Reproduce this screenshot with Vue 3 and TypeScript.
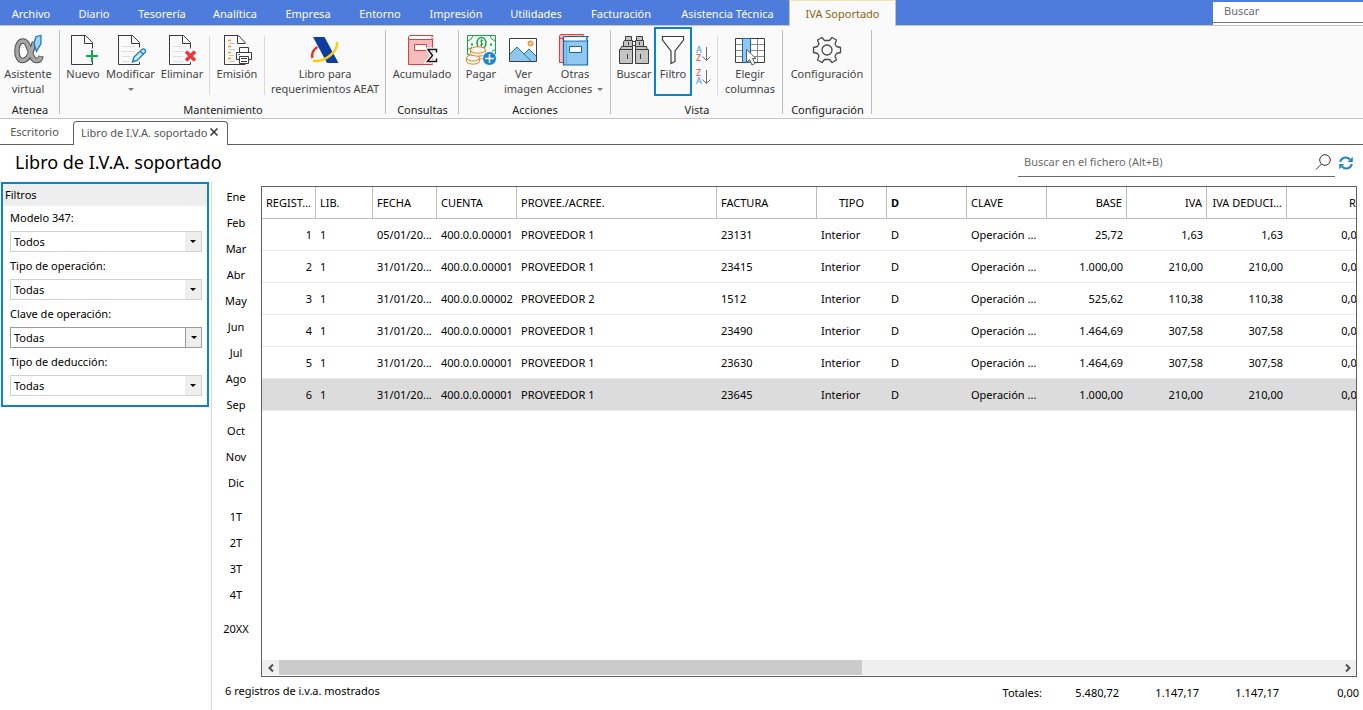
<script setup lang="ts">
import { ref } from 'vue'

interface Entry {
  id: number
  lib: string
  date: string
  account: string
  name: string
  invoice: string
  type: string
  d: string
  key: string
  base: string
  vat: string
  deductible: string
  re: string
}

interface Filter {
  id: string
  label: string
  value: string
}

const menu: string[] = [
  'Archivo', 'Diario', 'Tesorería', 'Analítica', 'Empresa', 'Entorno',
  'Impresión', 'Utilidades', 'Facturación', 'Asistencia Técnica', 'IVA Soportado',
]
const activeMenu = ref('IVA Soportado')

const filters: Filter[] = [
  { id: 'modelo', label: 'Modelo 347:', value: 'Todos' },
  { id: 'tipo-operacion', label: 'Tipo de operación:', value: 'Todas' },
  { id: 'clave', label: 'Clave de operación:', value: 'Todas' },
  { id: 'deduccion', label: 'Tipo de deducción:', value: 'Todas' },
]

const periods: string[][] = [
  ['Ene', 'Feb', 'Mar', 'Abr', 'May', 'Jun', 'Jul', 'Ago', 'Sep', 'Oct', 'Nov', 'Dic'],
  ['1T', '2T', '3T', '4T'],
  ['20XX'],
]

function entry(
  id: number, date: string, account: string, name: string,
  invoice: string, base: string, vat: string,
): Entry {
  return {
    id, lib: '1', date, account, name, invoice, type: 'Interior', d: 'D',
    key: 'Operación ...', base, vat, deductible: vat, re: '0,00',
  }
}

const rows: Entry[] = [
  entry(1, '05/01/20...', '400.0.0.00001', 'PROVEEDOR 1', '23131', '25,72', '1,63'),
  entry(2, '31/01/20...', '400.0.0.00001', 'PROVEEDOR 1', '23415', '1.000,00', '210,00'),
  entry(3, '31/01/20...', '400.0.0.00002', 'PROVEEDOR 2', '1512', '525,62', '110,38'),
  entry(4, '31/01/20...', '400.0.0.00001', 'PROVEEDOR 1', '23490', '1.464,69', '307,58'),
  entry(5, '31/01/20...', '400.0.0.00001', 'PROVEEDOR 1', '23630', '1.464,69', '307,58'),
  entry(6, '31/01/20...', '400.0.0.00001', 'PROVEEDOR 1', '23645', '1.000,00', '210,00'),
]
const selected = ref(6)
</script>

<template>
  <div class="app">
    <header class="menubar">
      <nav class="menu">
        <button
          v-for="item in menu"
          :key="item"
          type="button"
          :class="{ active: item === activeMenu }"
          @click="activeMenu = item"
        >{{ item }}</button>
      </nav>
      <input class="global-search" type="text" placeholder="Buscar" aria-label="Buscar">
    </header>

    <section class="ribbon">
      <div class="group atenea">
        <div class="tools">
          <button type="button" class="tool">
            <svg width="32" height="32" viewBox="0 0 32 32" fill="none">
              <path d="M22.500 8C20.500 15 17 26.500 10.500 26.500C3 26.500 3 7 11 7C18.500 7 17.500 26.500 24.500 26.500C27.500 26.500 28.500 25 29 22" stroke="#4d4d4d" stroke-width="5.500" />
              <path d="M22.500 8C20.500 15 17 26.500 10.500 26.500C3 26.500 3 7 11 7C18.500 7 17.500 26.500 24.500 26.500C27.500 26.500 28.500 25 28.800 22.500" stroke="#a6a6a6" stroke-width="3.500" />
              <path d="M24 2.500L29 1.500V9.500L24.500 17.500L22 9.500Z" fill="#9fd2f3" stroke="#1673bd" stroke-width="1.200" />
            </svg>
            <span>Asistente<br>virtual</span>
          </button>
        </div>
        <div class="caption">Atenea</div>
      </div>

      <div class="group mantenimiento">
        <div class="tools">
          <button type="button" class="tool">
            <svg width="32" height="32" viewBox="0 0 32 32" fill="none">
              <path d="M4 1.500H18.500L25.500 8.500V14.500M4.500 1V30.500H25.500V27" stroke="#3b3b3b" />
              <path d="M17.500 2V9.500H25" stroke="#3b3b3b" />
              <path d="M19 22H31M25 16V28" stroke="#10a64a" stroke-width="2" />
            </svg>
            <span>Nuevo</span>
          </button>
          <button type="button" class="tool">
            <svg width="32" height="32" viewBox="0 0 32 32" fill="none">
              <path d="M7 12.500H20M7 17.500H20M7 22.500H16M7 27.500H14" stroke="#dedede" />
              <path d="M3 1.500H17.500L24.500 8.500V13.500M3.500 1V30.500H24.500V28" stroke="#3b3b3b" />
              <path d="M16.500 2V9.500H24" stroke="#3b3b3b" />
              <path d="M19 23L27 15.500C29 14 31.500 16.500 30 18.500L22 26.500L17.500 28Z" fill="#d3eaf9" stroke="#2180c5" stroke-width="1.400" />
              <path d="M25.500 17.500L28.500 20.500" stroke="#2180c5" stroke-width="1.500" />
            </svg>
            <span>Modificar</span>
            <i class="caret"></i>
          </button>
          <button type="button" class="tool">
            <svg width="32" height="32" viewBox="0 0 32 32" fill="none">
              <path d="M7 12.500H20M7 17.500H18M7 22.500H17M7 27.500H19" stroke="#dedede" />
              <path d="M3 1.500H17.500L24.500 8.500V14.500M3.500 1V30.500H24.500V28" stroke="#3b3b3b" />
              <path d="M16.500 2V9.500H24" stroke="#3b3b3b" />
              <path d="M20 17.500L29 26.500M29 17.500L20 26.500" stroke="#ee3638" stroke-width="3.500" />
            </svg>
            <span>Eliminar</span>
          </button>
          <i class="rule"></i>
          <button type="button" class="tool">
            <svg width="32" height="32" viewBox="0 0 32 32" fill="none">
              <path d="M3 1.500H17.500L24.500 9M3.500 1V30.500H24.500" stroke="#3b3b3b" />
              <path d="M16.500 2V9.500H24.500" stroke="#3b3b3b" />
              <path d="M7 6.500H10M7 12.500H10M7 18.500H10M7 24.500H10" stroke="#f29a1f" stroke-width="1.500" />
              <path d="M8 9.500H14M8 15.500H14M8 21.500H13M8 27.500H14" stroke="#c6c6c6" />
              <path d="M18.500 18V13.500H27.500V18M18 25.500H15.500V18.500H30.500V25.500H28" fill="#fafafa" stroke="#3b3b3b" />
              <path d="M18.500 22.500H27.500V29.500H18.500ZM20 24.500H26M20 27.500H26" fill="#fafafa" stroke="#3b3b3b" />
              <path d="M17 20.500H19" stroke="#2d8fd5" />
            </svg>
            <span>Emisión</span>
          </button>
          <i class="rule"></i>
          <button type="button" class="tool">
            <svg width="32" height="32" viewBox="0 0 32 32" fill="none">
              <path d="M8.500 13C4.500 15 2 20 3.500 24" stroke="#e03131" stroke-width="2.500" />
              <path d="M4 3H15.500L29.500 29H18Z" fill="#0e3da0" />
              <path d="M28 8C29 17 17.500 28 4 27" stroke="#f8cd13" stroke-width="2.500" />
            </svg>
            <span>Libro para<br>requerimientos AEAT</span>
          </button>
        </div>
        <div class="caption">Mantenimiento</div>
      </div>

      <div class="group consultas">
        <div class="tools">
          <button type="button" class="tool">
            <svg width="32" height="32" viewBox="0 0 32 32" fill="none">
              <path d="M2.500 3V30.500H26.500V5.500H4C2 5.500 2 1.500 4 1.500H27L25.500 3.500L27 5.500" fill="#f4bcbc" stroke="#e63a3c" />
              <path d="M4 2H26L25 3.500L26 5H4C3 4.500 3 2.500 4 2Z" fill="#fff" />
              <path d="M8.500 10.500H20.500V16.500H8.500Z" fill="#fff" stroke="#e63a3c" />
              <path d="M30.500 18.500V15.500H22L26.500 21.500L21.500 27.500H30.500V24.500" stroke="#fafafa" stroke-width="4" />
              <path d="M30.500 18.500V15.500H22L26.500 21.500L21.500 27.500H30.500V24.500" stroke="#181818" stroke-width="1.500" />
            </svg>
            <span>Acumulado</span>
          </button>
        </div>
        <div class="caption">Consultas</div>
      </div>

      <div class="group acciones">
        <div class="tools">
          <button type="button" class="tool">
            <svg width="32" height="32" viewBox="0 0 32 32" fill="none">
              <path d="M2.500 1.500H30.500V20.500H2.500ZM3 6.500C6 6 7 4.500 7.500 2M30 6.500C27 6 26 4.500 25.500 2M30 16C27 16 26 18 25.500 20M3 15C5 15 6 14 7 13" fill="#f4fbf5" stroke="#18a34a" />
              <ellipse cx="16.500" cy="9" rx="4.500" ry="5.500" fill="#fff" stroke="#18a34a" stroke-width="1.500" />
              <path d="M18 6.500H16C14.500 8.500 18.500 9 17.500 11H15M16.500 5V13" stroke="#18a34a" />
              <path d="M6 10.500H8M25 10.500H27" stroke="#18a34a" stroke-width="2" />
              <g fill="#fff8ef" stroke="#e5812f">
                <path d="M1.500 25V27.500C2 31 14 31 14.500 27.500V25" />
                <path d="M4.500 20V23C5 26 19 26 19.500 23V20" />
                <ellipse cx="8" cy="24" rx="6.500" ry="3" />
                <path d="M5.500 16V19.500C6 23 20 23 20.500 19.500V16" />
                <ellipse cx="13" cy="16" rx="7.500" ry="3.200" />
              </g>
              <circle cx="24.500" cy="24.500" r="7" fill="#1c86cc" stroke="#fafafa" />
              <path d="M20 24.500H29M24.500 20V29" stroke="#fff" stroke-width="1.500" />
            </svg>
            <span>Pagar</span>
          </button>
          <button type="button" class="tool">
            <svg width="32" height="32" viewBox="0 0 32 32" fill="none">
              <path d="M1.500 4.500H28.500V27.500H1.500Z" fill="#fff" />
              <path d="M2 20L9 13L23 27H2Z" fill="#8fc6ec" />
              <path d="M16 20L21 15L28 22V27H23Z" fill="#8fc6ec" />
              <path d="M2 20L9 13L23 27M16 20L21 15L28 22" stroke="#1673bd" />
              <circle cx="22.500" cy="9.500" r="2.500" fill="#fbc27b" stroke="#e5812f" />
              <path d="M1.500 4.500H28.500V27.500H1.500Z" stroke="#3b3b3b" />
            </svg>
            <span>Ver<br>imagen</span>
          </button>
          <button type="button" class="tool">
            <svg width="32" height="32" viewBox="0 0 32 32" fill="none">
              <path d="M.500 2V28.500H5V4H23L24.500.500H2C0 .500 0 4.500 2 4.500H5" fill="#f7bcbc" stroke="#e63a3c" />
              <path d="M4.500 5V31H28.500V7H6C3.500 7 3.500 2.500 6 2.500H29L27.500 4.500L29 7" fill="#90c8ef" stroke="#1467a8" stroke-width="1.200" />
              <path d="M6 3.200H27.500L26.500 4.700L27.500 6.300H6C4.500 6 4.500 3.500 6 3.200Z" fill="#fff" />
              <path d="M10.500 12.500H22.500V18.500H10.500Z" fill="#fff" stroke="#1467a8" />
              <path d="M7.500 8V30" stroke="#5faede" />
            </svg>
            <span>Otras<br>Acciones <i class="caret inline"></i></span>
          </button>
        </div>
        <div class="caption">Acciones</div>
      </div>

      <div class="group vista">
        <div class="tools">
          <button type="button" class="tool">
            <svg width="32" height="32" viewBox="0 0 32 32" fill="none" stroke="#3b3b3b">
              <path d="M6.500 6.500H14.500V13.500H5.500V8ZM17.500 6.500H25.500V13.500H17.500ZM7.500 2.500H13.500V6.500H7.500ZM18.500 2.500H24.500V6.500H18.500Z" fill="#c4c4c4" />
              <path d="M14.500 7.500H17.500V11.500H14.500Z" fill="#fff" />
              <path d="M3.500 12.500H14.500V16H2.500V15ZM17.500 12.500H28.500L29.500 16H17.500Z" fill="#c4c4c4" />
              <path d="M1.500 15.500H14.500V29.500H1.500ZM17.500 15.500H30.500V29.500H17.500Z" fill="#c4c4c4" />
              <path d="M9.500 20V25M22.500 20V25M10.500 8V11M21.500 8V11" />
            </svg>
            <span>Buscar</span>
          </button>
          <button type="button" class="tool pressed">
            <svg width="32" height="32" viewBox="0 0 32 32" fill="none">
              <path d="M5.500 2.500H26.500V6L18 17V27.500L14 29.500V17L5.500 6Z" fill="#fff" stroke="#3b3b3b" stroke-width="1.200" />
            </svg>
            <span>Filtro</span>
          </button>
          <div class="sorts">
            <button type="button" aria-label="Orden ascendente">
              <svg width="16" height="18" viewBox="0 0 16 18" fill="none">
                <text x="1" y="8" font-size="9" fill="#3a93cf">A</text>
                <text x="1" y="16" font-size="9" fill="#e8484a">Z</text>
                <path d="M11.500 2V15M7.500 11.500L11.500 15.500L15.500 11.500" stroke="#6b6b6b" />
              </svg>
            </button>
            <button type="button" aria-label="Orden descendente">
              <svg width="16" height="18" viewBox="0 0 16 18" fill="none">
                <text x="1" y="8" font-size="9" fill="#e8484a">Z</text>
                <text x="1" y="16" font-size="9" fill="#3a93cf">A</text>
                <path d="M11.500 2V15M7.500 11.500L11.500 15.500L15.500 11.500" stroke="#6b6b6b" />
              </svg>
            </button>
          </div>
          <i class="rule"></i>
          <button type="button" class="tool">
            <svg width="32" height="32" viewBox="0 0 32 32" fill="none">
              <path d="M1.500 4.500H30.500V28.500H1.500Z" fill="#fff" />
              <path d="M2 10.500H30M2 16.500H30M2 22.500H30M16.500 5V28M23.500 5V28" stroke="#8b8b8b" />
              <path d="M1.500 4.500H30.500V28.500H1.500Z" stroke="#3b3b3b" />
              <path d="M8.500 4.500H16.500V28.500H8.500Z" fill="#90c8ef" stroke="#1467a8" />
              <path d="M12.500 15.500V28.500L15.500 25.500L18 31L21 29.500L18.500 24.500H22Z" fill="#fff" stroke="#5a5a5a" />
            </svg>
            <span>Elegir<br>columnas</span>
          </button>
        </div>
        <div class="caption">Vista</div>
      </div>

      <div class="group config">
        <div class="tools">
          <button type="button" class="tool">
            <svg width="32" height="32" viewBox="0 0 32 32" fill="none" stroke="#4a4a4a" stroke-width="1.300">
              <path d="M2.500 13.500L6.500 12.500L8 10L6.500 6L11 3.500L13.500 6.500H18.500L21 3.500L25.500 6L24 10L25.500 12.500L29.500 13.500V18.500L25.500 19.500L24 22L25.500 26L21 28.500L18.500 25.500H13.500L11 28.500L6.500 26L8 22L6.500 19.500L2.500 18.500Z" stroke-linejoin="round" />
              <circle cx="16" cy="16" r="5" />
            </svg>
            <span>Configuración</span>
          </button>
        </div>
        <div class="caption">Configuración</div>
      </div>
    </section>

    <nav class="documents">
      <button type="button" class="doc">Escritorio</button>
      <div class="doc current">
        <span>Libro de I.V.A. soportado</span>
        <button type="button" class="close" aria-label="Cerrar">
          <svg width="8" height="8" viewBox="0 0 8 8"><path d="M.500.500L7.500 7.500M7.500.500L.500 7.500" stroke="#333" stroke-width="1.500" /></svg>
        </button>
      </div>
      <div class="doc-rest"></div>
    </nav>

    <div class="heading">
      <h1>Libro de I.V.A. soportado</h1>
      <div class="file-search">
        <input type="text" placeholder="Buscar en el fichero (Alt+B)" aria-label="Buscar en el fichero">
        <button type="button" aria-label="Buscar">
          <svg width="16" height="16" viewBox="0 0 16 16" fill="none" stroke="#333"><circle cx="10" cy="6" r="5.300" /><path d="M6.500 10L1 15.500" /></svg>
        </button>
      </div>
      <button type="button" class="refresh" aria-label="Actualizar">
        <svg width="14" height="14" viewBox="0 0 14 14" fill="none">
          <path d="M1.200 6C2 2 7.500-.500 11 3.500M12.800 8C12 12 6.500 14.500 3 10.500" stroke="#2486cc" stroke-width="2" />
          <path d="M13.800.800V6H8.600ZM.200 13.200V8H5.400Z" fill="#2486cc" />
        </svg>
      </button>
    </div>

    <main class="body">
      <aside class="filters-column">
        <form class="filters">
          <h2>Filtros</h2>
          <div v-for="f in filters" :key="f.id" class="field">
            <label :for="f.id">{{ f.label }}</label>
            <div class="combo" :class="{ focus: f.id === 'clave' }">
              <select :id="f.id"><option>{{ f.value }}</option></select>
              <i class="arrow"></i>
            </div>
          </div>
        </form>
      </aside>

      <nav class="periods">
        <div v-for="(set, i) in periods" :key="i" class="period-set">
          <button v-for="p in set" :key="p" type="button">{{ p }}</button>
        </div>
      </nav>

      <section class="content">
        <div class="grid">
          <div class="viewport">
            <table>
              <colgroup>
                <col class="w54"><col class="w57"><col class="w64"><col class="w80"><col class="w200">
                <col class="w100"><col class="w70"><col class="w80"><col class="w80"><col class="w80">
                <col class="w80"><col class="w80"><col class="w80">
              </colgroup>
              <thead>
                <tr>
                  <th>REGIST...</th>
                  <th>LIB.</th>
                  <th>FECHA</th>
                  <th>CUENTA</th>
                  <th>PROVEE./ACREE.</th>
                  <th>FACTURA</th>
                  <th class="mid">TIPO</th>
                  <th class="strong">D</th>
                  <th>CLAVE</th>
                  <th class="num">BASE</th>
                  <th class="num">IVA</th>
                  <th class="num">IVA DEDUCI...</th>
                  <th class="num">RE</th>
                </tr>
              </thead>
              <tbody>
                <tr v-for="r in rows" :key="r.id" :class="{ selected: r.id === selected }" @click="selected = r.id">
                  <td class="num">{{ r.id }}</td>
                  <td>{{ r.lib }}</td>
                  <td>{{ r.date }}</td>
                  <td>{{ r.account }}</td>
                  <td>{{ r.name }}</td>
                  <td>{{ r.invoice }}</td>
                  <td>{{ r.type }}</td>
                  <td>{{ r.d }}</td>
                  <td>{{ r.key }}</td>
                  <td class="num">{{ r.base }}</td>
                  <td class="num">{{ r.vat }}</td>
                  <td class="num">{{ r.deductible }}</td>
                  <td class="num">{{ r.re }}</td>
                </tr>
              </tbody>
            </table>
          </div>
          <div class="scrollbar">
            <button type="button" aria-label="Desplazar a la izquierda">
              <svg width="8" height="8" viewBox="0 0 8 8" fill="none"><path d="M6 .500L2.500 4L6 7.500" stroke="#505050" stroke-width="2" /></svg>
            </button>
            <div class="track"><div class="thumb"></div></div>
            <button type="button" aria-label="Desplazar a la derecha">
              <svg width="8" height="8" viewBox="0 0 8 8" fill="none"><path d="M2 .500L5.500 4L2 7.500" stroke="#505050" stroke-width="2" /></svg>
            </button>
          </div>
        </div>
        <footer class="status">
          <span class="count">6 registros de i.v.a. mostrados</span>
          <div class="totals">
            <span>Totales:</span><span>5.480,72</span><span>1.147,17</span><span>1.147,17</span><span>0,00</span>
          </div>
        </footer>
      </section>
    </main>
  </div>
</template>

<style>
body {
  margin: 0;
  background: #fff;
}
</style>

<style scoped>
* {
  box-sizing: border-box;
}

.app {
  display: flex;
  flex-direction: column;
  min-height: 100vh;
  overflow: hidden;
  font-family: "Noto Sans", "Open Sans", sans-serif;
  font-size: 11px;
  line-height: 15px;
  color: #000;
}

button,
input,
select {
  font: inherit;
  color: inherit;
  border: 0;
  padding: 0;
  margin: 0;
  background: none;
  border-radius: 0;
}

input {
  outline: none;
}

input::placeholder {
  color: #6a6a6a;
  opacity: 1;
}

svg {
  display: block;
  flex: none;
}

/* menu */
.menubar {
  display: flex;
  justify-content: space-between;
  height: 25px;
  background: #4d7cdc;
}

.menu {
  display: grid;
  grid-template-columns: 62px 64px 72px 74px 72px 72px 80px 80px 90px 123px 107px;
}

.menu button {
  color: #fff;
  white-space: nowrap;
}

.menu .active {
  position: relative;
  z-index: 1;
  height: 26px;
  background: #fafafa;
  border: 1px solid #c4c4c4;
  border-top-color: #f3e3b0;
  border-bottom: 0;
  color: #8a6410;
}

.global-search {
  width: 150px;
  height: 21px;
  margin-top: 2px;
  padding: 0 11px 4px;
  background: #fff;
  border-bottom: 1px solid #777;
  box-shadow: 0 2px #fff;
}

/* ribbon */
.ribbon {
  display: flex;
  height: 94px;
  padding-top: 1px;
  background: #fafafa;
  border-top: 1px solid #c4c4c4;
  border-bottom: 1px solid #c4c4c4;
}

.group {
  display: flex;
  flex-direction: column;
  position: relative;
}

.group::after {
  content: "";
  position: absolute;
  right: 0;
  top: 3px;
  bottom: 4px;
  width: 1px;
  background: #bfbfbf;
}

.atenea { width: 60px; }
.mantenimiento { width: 326px; }
.consultas { width: 73px; }
.acciones { width: 152px; }
.vista { width: 172px; }
.config { width: 89px; }

.tools {
  display: grid;
  height: 69px;
}

.atenea .tools { grid-template-columns: 56px; }
.mantenimiento .tools { grid-template-columns: 46px 49px 54px 1px 54px 1px 120px; }
.consultas .tools { grid-template-columns: 72px; }
.acciones .tools { grid-template-columns: 44px 41px 62px; }
.vista .tools { grid-template-columns: 40px 38px 22px 4px 64px; padding-left: 3px; }
.vista .rule { margin-left: 3px; }
.config .tools { grid-template-columns: 88px; }

.tool {
  display: flex;
  flex-direction: column;
  align-items: center;
  padding-top: 7px;
  color: #444;
  white-space: nowrap;
  min-width: 0;
}

.tool.pressed {
  box-shadow: inset 0 0 0 2px #0b84c6;
}

.rule {
  width: 1px;
  height: 59px;
  margin-top: 9px;
  background: #dadada;
}

.caret {
  width: 0;
  height: 0;
  margin-top: 7px;
  border: 3px solid transparent;
  border-top-color: #777;
  border-bottom: 0;
}

.caret.inline {
  display: inline-block;
  margin: 0 0 2px 2px;
}

.sorts {
  display: flex;
  flex-direction: column;
  align-items: center;
  gap: 5px;
  padding-top: 18px;
}

.caption {
  padding-top: 6px;
  text-align: center;
  color: #222;
}

/* open documents */
.documents {
  display: flex;
  height: 26px;
  padding-top: 2px;
}

.doc {
  width: 73px;
  padding: 0 4px 2px 0;
  border-bottom: 1px solid #5f5f5f;
  color: #555;
}

.doc.current {
  display: flex;
  align-items: center;
  justify-content: space-between;
  width: 155px;
  padding: 0 9px 3px 7px;
  border: 1px solid #5f5f5f;
  border-bottom: 0;
  border-radius: 4px 4px 0 0;
}

.doc-rest {
  flex: 1;
  border-bottom: 1px solid #5f5f5f;
}

/* heading */
.heading {
  display: flex;
  height: 37px;
  padding: 0 10px 0 15px;
}

h1 {
  flex: 1;
  margin: 0;
  font-size: 18px;
  line-height: 34px;
  font-weight: 400;
}

.file-search {
  display: flex;
  align-items: center;
  width: 317px;
  height: 32px;
  padding: 3px 4px 0 6px;
  border-bottom: 1px solid #6b6b6b;
}

.file-search input {
  flex: 1;
  min-width: 0;
  padding-bottom: 2px;
}

.refresh {
  height: 35px;
  margin-left: 4px;
}

/* body */
.body {
  display: flex;
  flex: 1;
}

.filters-column {
  width: 212px;
  padding-left: 1px;
  border-right: 1px solid #d5d8d8;
}

.filters {
  width: 208px;
  padding-bottom: 9px;
  border: 2px solid #0b84c6;
}

h2 {
  margin: 0 0 4px;
  padding-left: 2px;
  font-size: 11px;
  line-height: 22px;
  font-weight: 400;
  background: #eee;
}

.field {
  padding: 0 5px 0 7px;
}

.field + .field {
  margin-top: 6px;
}

.field label {
  display: block;
  line-height: 16px;
  margin-bottom: 5px;
}

.combo {
  position: relative;
  height: 21px;
  border: 1px solid #d0d0d0;
}

.combo select {
  display: block;
  width: 100%;
  height: 19px;
  padding: 0 20px 0 3px;
  appearance: none;
  outline: none;
}

.arrow {
  position: absolute;
  top: 0;
  right: 0;
  bottom: 0;
  width: 16px;
  background: #eee;
  pointer-events: none;
}

.arrow::after {
  content: "";
  position: absolute;
  left: 5px;
  top: 8px;
  border: 3px solid transparent;
  border-top-color: #000;
  border-bottom: 0;
}

.combo.focus {
  border-color: #9c9c9c;
}

.combo.focus .arrow {
  border-left: 1px solid #9c9c9c;
}

.periods {
  display: flex;
  flex-direction: column;
  gap: 8px;
  width: 49px;
  padding: 1px 1px 0 0;
}

.period-set {
  display: flex;
  flex-direction: column;
}

.period-set button {
  height: 26px;
}

.content {
  display: flex;
  flex-direction: column;
  flex: 1;
  min-width: 0;
}

.grid {
  display: flex;
  flex-direction: column;
  flex: 1;
  margin: 4px 6px 0 0;
  border: 1px solid #5f5f5f;
}

.viewport {
  flex: 1;
  overflow: hidden;
}

table {
  width: 1105px;
  table-layout: fixed;
  border-collapse: separate;
  border-spacing: 0;
}

.w54 { width: 54px; }
.w57 { width: 57px; }
.w64 { width: 64px; }
.w70 { width: 70px; }
.w80 { width: 80px; }
.w100 { width: 100px; }
.w200 { width: 200px; }

th,
td {
  height: 32px;
  padding: 0 4px;
  text-align: left;
  font-weight: 400;
  white-space: nowrap;
}

th {
  border-right: 1px solid #bdbdbd;
  border-bottom: 1px solid #bdbdbd;
}

th:first-child {
  padding-right: 0;
}

td {
  border-bottom: 1px solid #ebebeb;
}

.num {
  text-align: right;
}

.mid {
  text-align: center;
}

.strong {
  font-weight: 700;
}

.selected td {
  background: #dcdcdc;
}

.scrollbar {
  display: flex;
  height: 16px;
  padding-bottom: 1px;
  background: #fff;
}

.scrollbar button {
  display: flex;
  align-items: center;
  justify-content: center;
  width: 17px;
  background: #efefef;
}

.track {
  flex: 1;
  background: #efefef;
}

.thumb {
  width: 55%;
  height: 100%;
  background: #cbcbcb;
}

.status {
  display: flex;
  justify-content: space-between;
  height: 33px;
  padding-right: 4px;
}

.count {
  margin-left: -36px;
  padding-top: 6px;
}

.totals {
  display: grid;
  grid-template-columns: 80px 77px 80px 80px 80px;
  padding-top: 8px;
  text-align: right;
}
</style>
